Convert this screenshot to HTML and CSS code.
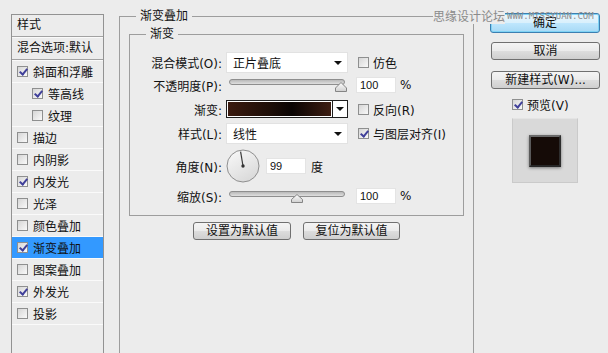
FILE: index.html
```html
<!DOCTYPE html>
<html lang="zh-CN">
<head>
<meta charset="utf-8">
<title>图层样式 - 渐变叠加</title>
<link rel="stylesheet" href="styles.css">
</head>
<body>
<div class="dialog">
  <div class="styles-list">
    <div class="list-head">样式</div>
    <div class="list-blend">混合选项:默认</div>
    <ul class="items">
      <li class="item"><span class="cb checked"></span>斜面和浮雕</li>
      <li class="item sub"><span class="cb checked"></span>等高线</li>
      <li class="item sub"><span class="cb"></span>纹理</li>
      <li class="item"><span class="cb"></span>描边</li>
      <li class="item"><span class="cb"></span>内阴影</li>
      <li class="item"><span class="cb checked"></span>内发光</li>
      <li class="item"><span class="cb"></span>光泽</li>
      <li class="item"><span class="cb"></span>颜色叠加</li>
      <li class="item active"><span class="cb checked"></span>渐变叠加</li>
      <li class="item"><span class="cb"></span>图案叠加</li>
      <li class="item"><span class="cb checked"></span>外发光</li>
      <li class="item"><span class="cb"></span>投影</li>
    </ul>
  </div>

  <div class="main">
    <div class="group outer">
      <span class="legend">渐变叠加</span>
      <div class="group inner">
        <span class="legend">渐变</span>

        <div class="row r1">
          <span class="lbl">混合模式(O):</span>
          <div class="select"><span class="sel-text">正片叠底</span><span class="tri"></span></div>
          <label class="chk after-select"><span class="cb"></span>仿色</label>
        </div>

        <div class="row r2">
          <span class="lbl">不透明度(P):</span>
          <svg class="slider" width="122" height="16" viewBox="0 0 122 16">
            <defs>
              <linearGradient id="trk1" x1="0" y1="0" x2="0" y2="1">
                <stop offset="0" stop-color="#b4b4b4"/>
                <stop offset="1" stop-color="#e4e4e4"/>
              </linearGradient>
              <linearGradient id="thm1" x1="0" y1="0" x2="0" y2="1">
                <stop offset="0" stop-color="#ffffff"/>
                <stop offset="1" stop-color="#cfcfcf"/>
              </linearGradient>
            </defs>
            <rect x="3.5" y="2.5" width="115" height="5" rx="2.5" fill="url(#trk1)" stroke="#8e8e8e"/>
            <path d="M115 5.5 L120.5 11 L120.5 14.5 L109.5 14.5 L109.5 11 Z" fill="url(#thm1)" stroke="#858585"/>
          </svg>
          <span class="num">100</span>
          <span class="unit">%</span>
        </div>

        <div class="row r3">
          <span class="lbl">渐变:</span>
          <div class="grad"><span class="grad-fill"></span><span class="grad-arrow"><span class="tri"></span></span></div>
          <label class="chk after-grad"><span class="cb"></span>反向(R)</label>
        </div>

        <div class="row r4">
          <span class="lbl">样式(L):</span>
          <div class="select"><span class="sel-text">线性</span><span class="tri"></span></div>
          <label class="chk after-select"><span class="cb checked"></span>与图层对齐(I)</label>
        </div>

        <div class="row r5">
          <span class="lbl">角度(N):</span>
          <svg class="dial" width="34" height="34" viewBox="0 0 34 34">
            <defs>
              <linearGradient id="dialg" x1="0" y1="0" x2="0.6" y2="1">
                <stop offset="0" stop-color="#fafafa"/>
                <stop offset="1" stop-color="#dadada"/>
              </linearGradient>
            </defs>
            <circle cx="17" cy="17" r="16" fill="url(#dialg)" stroke="#8f8f8f"/>
            <line x1="17" y1="17" x2="14.6" y2="2.6" stroke="#3a3a3a" stroke-width="1.2"/>
            <circle cx="17" cy="17" r="1.7" fill="#333"/>
          </svg>
          <span class="num angle">99</span>
          <span class="unit deg">度</span>
        </div>

        <div class="row r6">
          <span class="lbl">缩放(S):</span>
          <svg class="slider" width="122" height="16" viewBox="0 0 122 16">
            <defs>
              <linearGradient id="trk2" x1="0" y1="0" x2="0" y2="1">
                <stop offset="0" stop-color="#b4b4b4"/>
                <stop offset="1" stop-color="#e4e4e4"/>
              </linearGradient>
              <linearGradient id="thm2" x1="0" y1="0" x2="0" y2="1">
                <stop offset="0" stop-color="#ffffff"/>
                <stop offset="1" stop-color="#cfcfcf"/>
              </linearGradient>
            </defs>
            <rect x="3.5" y="3.5" width="115" height="5" rx="2.5" fill="url(#trk2)" stroke="#8e8e8e"/>
            <path d="M71 6.5 L76.5 11.5 L76.5 14.5 L65.5 14.5 L65.5 11.5 Z" fill="url(#thm2)" stroke="#858585"/>
          </svg>
          <span class="num">100</span>
          <span class="unit">%</span>
        </div>
      </div>

      <div class="defaults">
        <button class="btn def1">设置为默认值</button>
        <button class="btn def2">复位为默认值</button>
      </div>
    </div>
  </div>

  <div class="side">
    <button class="btn ok">确定</button>
    <button class="btn side-btn cancel">取消</button>
    <button class="btn side-btn newstyle">新建样式(W)...</button>
    <label class="chk preview-chk"><span class="cb checked"></span>预览(V)</label>
    <div class="preview"><span class="swatch"></span></div>
  </div>

  <div class="watermark"><span class="wm-cn">思缘设计论坛</span><span class="wm-en">WWW.MISSYUAN.COM</span></div>
</div>
</body>
</html>
```

FILE: styles.css
```css
* { box-sizing: border-box; }

html, body {
  margin: 0;
  padding: 0;
  background: #ececec;
}

body {
  font-family: "DejaVu Sans", "Noto Sans CJK SC", sans-serif;
  font-size: 12px;
  color: #111;
}

.dialog {
  position: relative;
  display: flex;
  width: 608px;
  height: 353px;
  overflow: hidden;
}

/* ---------- left list ---------- */
.styles-list {
  margin: 14px 0 0 11px;
  width: 93px;
  height: 360px;
  border: 1px solid #929292;
  border-bottom: none;
  background: #ececec;
  flex-shrink: 0;
}

.list-head {
  height: 22px;
  line-height: 21px;
  padding-left: 5px;
  border-bottom: 1px solid #a2a2a2;
}

.list-blend {
  height: 23px;
  line-height: 21px;
  padding-left: 5px;
  border-top: 1px solid #fafafa;
  border-bottom: 1px solid #a2a2a2;
}

.items {
  list-style: none;
  margin: 0;
  padding: 0;
  border-top: 1px solid #fafafa;
}

.item {
  display: flex;
  align-items: center;
  height: 22px;
  padding-left: 5px;
  border-bottom: 1px solid #fafafa;
}

.item.sub { padding-left: 20px; }

.item.active { background: #3399ff; }

.item .cb { margin-right: 5px; }

/* ---------- checkbox ---------- */
.cb {
  position: relative;
  display: inline-block;
  width: 11px;
  height: 11px;
  border: 1px solid #8e8f8f;
  background: linear-gradient(135deg, #d6d6d6, #f9f9f9);
  flex-shrink: 0;
}

.cb.checked::after {
  content: "";
  position: absolute;
  left: 3px;
  top: 0px;
  width: 3px;
  height: 6px;
  border-right: 2px solid #40409a;
  border-bottom: 2px solid #40409a;
  transform: rotate(40deg);
}

.chk {
  display: flex;
  align-items: center;
}

.chk .cb { margin-right: 4px; }

/* ---------- groups ---------- */
.main {
  margin-left: 15px;
  flex-shrink: 0;
}

.group {
  position: relative;
  border: 1px solid #9d9d9d;
}

.legend {
  position: absolute;
  top: -9px;
  left: 16px;
  padding: 0 4px;
  line-height: 16px;
  background: #ececec;
}

.outer {
  margin-top: 16px;
  width: 355px;
  height: 400px;
  border-bottom: none;
}

.inner {
  margin: 17px 9px 0 9px;
  padding: 17px 0 11px 0;
}

/* ---------- rows ---------- */
.row {
  display: flex;
  align-items: center;
}

.lbl {
  width: 92px;
  margin-right: 4px;
  text-align: right;
  white-space: nowrap;
}

.r1 { height: 21px; }
.r2 { height: 16px; margin-top: 4px; }
.r3 { height: 18px; margin-top: 7px; }
.r4 { height: 21px; margin-top: 5px; }
.r5 { height: 32px; margin-top: 6px; }
.r6 { height: 16px; margin-top: 6px; }

.select {
  display: flex;
  align-items: center;
  justify-content: space-between;
  width: 122px;
  height: 21px;
  padding: 0 5px 0 6px;
  background: #fff;
  border: 1px solid #e2e2e2;
}

.tri {
  width: 0;
  height: 0;
  border-left: 4px solid transparent;
  border-right: 4px solid transparent;
  border-top: 4px solid #111;
}

.after-select { margin-left: 10px; }
.after-grad { margin-left: 10px; }

.slider { display: block; }

.num {
  width: 40px;
  height: 16px;
  margin-left: 8px;
  padding-left: 3px;
  background: #fff;
  border: 1px solid #e4e4e4;
  font-family: "Liberation Sans", sans-serif;
  font-size: 11px;
  line-height: 14px;
}

.num.angle { margin-left: 6px; }

.unit { margin-left: 4px; }
.unit.deg { margin-left: 5px; }

.grad {
  display: flex;
  width: 122px;
  height: 18px;
  border: 1px solid #1e1e1e;
  background: #fff;
}

.grad-fill {
  flex: 1;
  margin: 1px;
  background: linear-gradient(90deg, #3b1b10 0%, #1c0d07 42%, #0a0403 62%, #3d1d12 100%);
}

.grad-arrow {
  display: flex;
  align-items: center;
  justify-content: center;
  width: 15px;
  border-left: 1px solid #1e1e1e;
}

.dial {
  display: block;
  margin-left: 0;
}

/* ---------- buttons ---------- */
.btn {
  font-family: "DejaVu Sans", "Noto Sans CJK SC", sans-serif;
  font-size: 12px;
  color: #111;
  padding: 0;
  border: 1px solid #707070;
  border-radius: 3px;
  background: linear-gradient(#f4f4f4 0%, #ebebeb 48%, #dddddd 52%, #cfcfcf 100%);
  line-height: 16px;
}

.defaults {
  display: flex;
  justify-content: center;
  gap: 12px;
  margin-top: 6px;
}

.def1 { width: 98px; height: 18px; }
.def2 { width: 97px; height: 18px; }

.side {
  display: flex;
  flex-direction: column;
  align-items: flex-start;
  width: 134px;
  padding: 13px 0 0 17px;
  flex-shrink: 0;
}

.ok {
  width: 110px;
  height: 20px;
  margin-left: -1px;
  border-color: #3c7fb1;
  box-shadow: inset 0 0 0 1px #7fd3f5;
  background: linear-gradient(#eaf6fd 0%, #d9f0fc 48%, #bee6fd 52%, #a7d9f5 100%);
}

.side-btn {
  width: 109px;
  height: 18px;
}

.cancel { margin-top: 9px; }
.newstyle { margin-top: 11px; }

.preview-chk {
  height: 16px;
  margin: 7px 0 0 21px;
}

.preview {
  display: flex;
  align-items: center;
  justify-content: center;
  width: 66px;
  height: 65px;
  margin: 6px 0 0 21px;
  background: #d9d9d9;
  border: 1px solid #cacaca;
  border-top-color: #e4e4e4;
}

.swatch {
  width: 32px;
  height: 32px;
  background: #150b07;
  border: 2px solid;
  border-color: #6a6a6a #2e2e2e #262626 #5a5a5a;
  box-shadow: 0 1px 3px rgba(0, 0, 0, 0.45);
}

/* ---------- watermark overlay ---------- */
.watermark {
  position: absolute;
  top: 8px;
  left: 433px;
  display: flex;
  align-items: center;
  line-height: 16px;
  white-space: nowrap;
}

.wm-cn {
  font-family: "Noto Sans CJK SC", sans-serif;
  font-size: 12px;
  color: #8a8a8a;
  background: #ececec;
}

.wm-en {
  margin-left: 2px;
  font-family: "DejaVu Sans Mono", monospace;
  font-size: 9px;
  color: #8c8c8c;
  letter-spacing: 0;
}
```
